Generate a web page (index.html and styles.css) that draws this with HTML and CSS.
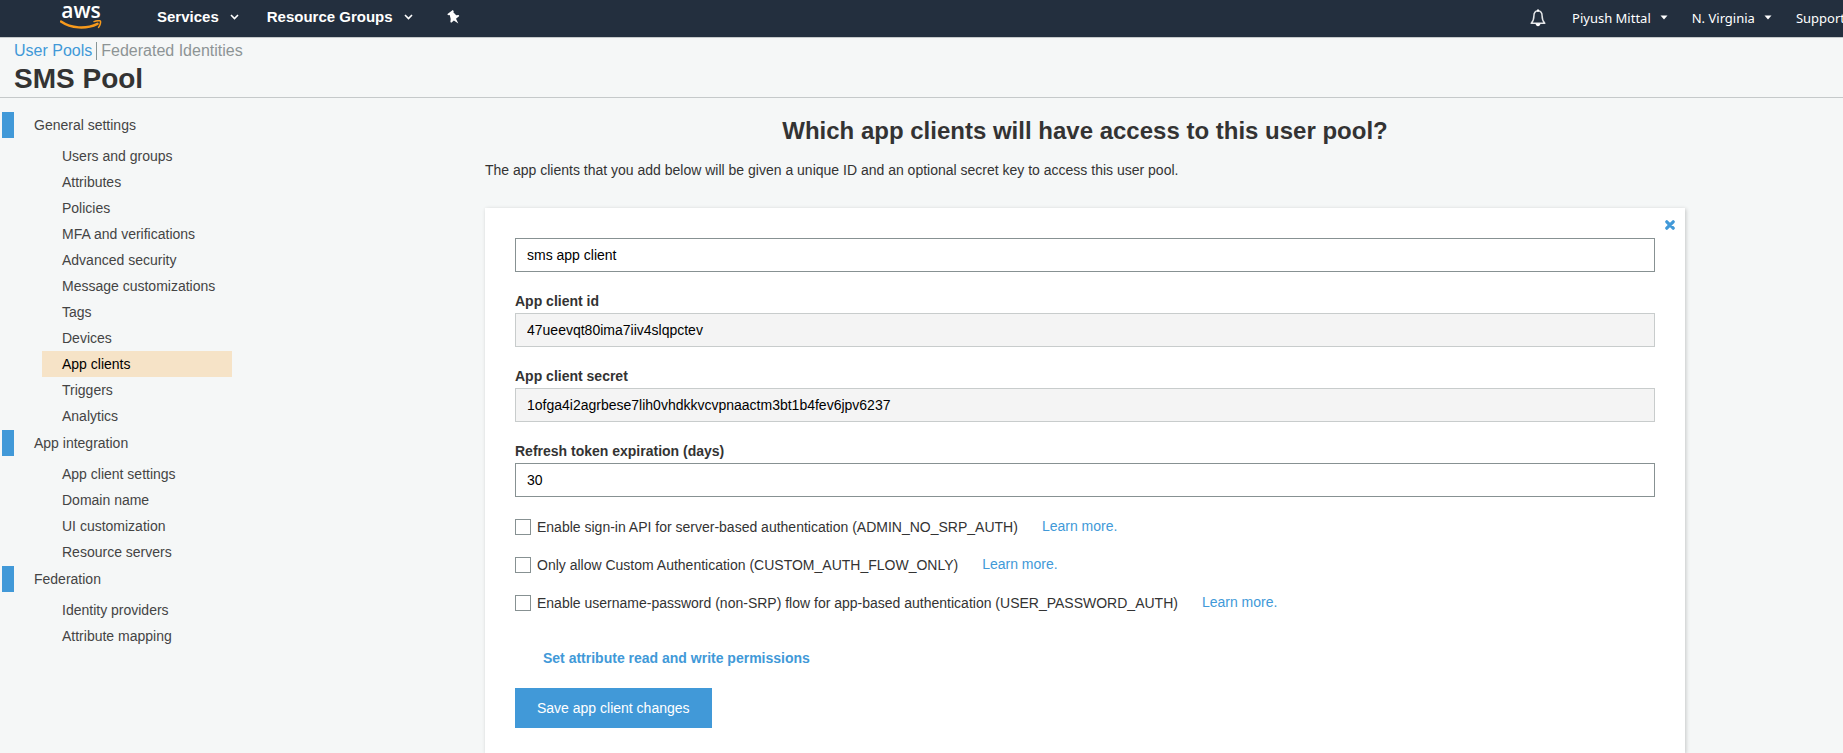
FILE: index.html
```
<!DOCTYPE html>
<html lang="en">
<head>
<meta charset="utf-8">
<title>SMS Pool - User Pools</title>
<link rel="stylesheet" href="styles.css">
</head>
<body>
<header class="topbar">
  <a class="logo" href="#" aria-label="aws">
    <span class="logo-text">aws</span>
    <svg class="logo-smile" width="42" height="10" viewBox="0 0 42 10" aria-hidden="true">
      <path d="M1 1.5C11 8.5 26 9.5 37.5 3.8" fill="none" stroke="#f79a1c" stroke-width="2.4" stroke-linecap="round"/>
      <path d="M34 1.6C37 .6 40 .6 40.4 1.2 41 2.2 40 5.6 38.6 7.4" fill="none" stroke="#f79a1c" stroke-width="1.5" stroke-linecap="round"/>
    </svg>
  </a>
  <nav class="nav-main">
    <button class="nav-item" type="button">Services
      <svg width="9" height="6" viewBox="0 0 9 6" aria-hidden="true"><path d="M1 1l3.5 3.5L8 1" fill="none" stroke="#fff" stroke-width="1.6"/></svg>
    </button>
    <button class="nav-item" type="button">Resource Groups
      <svg width="9" height="6" viewBox="0 0 9 6" aria-hidden="true"><path d="M1 1l3.5 3.5L8 1" fill="none" stroke="#fff" stroke-width="1.6"/></svg>
    </button>
    <button class="nav-pin" type="button" aria-label="Pin shortcuts">
      <svg width="13" height="14" viewBox="0 0 13 14" aria-hidden="true"><path d="M5.8 0L6.8 1.2 6.3 2.3 9.2 5.2 11.6 5.1 12.3 6.1 9 8.8 11.3 13.4 6.9 10.4 4.2 12.8 3.4 11.9 3.7 9.1 2.7 5.1 1.5 5.3.2 4.2z" fill="#fff"/></svg>
    </button>
  </nav>
  <nav class="nav-account">
    <button class="nav-bell" type="button" aria-label="Notifications">
      <svg width="16" height="18" viewBox="0 0 16 18" aria-hidden="true"><path d="M8 1.8C4.900 2 3.900 4.200 3.900 7 3.900 10.500 3 12.500 1.200 14.200H14.800C13 12.500 12.100 10.500 12.100 7 12.100 4.200 11.100 2 8 1.800z" fill="none" stroke="#e4e6e8" stroke-width="1.5" stroke-linejoin="round"/><path d="M7 .5h2v2H7zM5.500 14.500h5c-.3 1.700-1.200 2.700-2.500 2.700s-2.200-1-2.500-2.700z" fill="#fff"/></svg>
    </button>
    <button class="account-item" type="button">Piyush Mittal
      <svg width="8" height="5" viewBox="0 0 8 5" aria-hidden="true"><path d="M.5.500h7L4 4.500z" fill="#fff"/></svg>
    </button>
    <button class="account-item" type="button">N. Virginia
      <svg width="8" height="5" viewBox="0 0 8 5" aria-hidden="true"><path d="M.5.500h7L4 4.500z" fill="#fff"/></svg>
    </button>
    <button class="account-item" type="button">Support</button>
  </nav>
</header>

<div class="pool-header">
  <div class="crumbs"><a class="crumb crumb-active" href="#">User Pools</a><a class="crumb" href="#">Federated Identities</a></div>
  <h1 class="pool-name">SMS Pool</h1>
</div>

<div class="layout">
  <nav class="sidebar">
    <section class="group">
      <a class="group-title" href="#">General settings</a>
      <ul class="group-list">
        <li><a href="#">Users and groups</a></li>
        <li><a href="#">Attributes</a></li>
        <li><a href="#">Policies</a></li>
        <li><a href="#">MFA and verifications</a></li>
        <li><a href="#">Advanced security</a></li>
        <li><a href="#">Message customizations</a></li>
        <li><a href="#">Tags</a></li>
        <li><a href="#">Devices</a></li>
        <li><a class="current" href="#">App clients</a></li>
        <li><a href="#">Triggers</a></li>
        <li><a href="#">Analytics</a></li>
      </ul>
    </section>
    <section class="group">
      <a class="group-title" href="#">App integration</a>
      <ul class="group-list">
        <li><a href="#">App client settings</a></li>
        <li><a href="#">Domain name</a></li>
        <li><a href="#">UI customization</a></li>
        <li><a href="#">Resource servers</a></li>
      </ul>
    </section>
    <section class="group">
      <a class="group-title" href="#">Federation</a>
      <ul class="group-list">
        <li><a href="#">Identity providers</a></li>
        <li><a href="#">Attribute mapping</a></li>
      </ul>
    </section>
  </nav>

  <main class="content">
    <h2 class="title">Which app clients will have access to this user pool?</h2>
    <p class="intro">The app clients that you add below will be given a unique ID and an optional secret key to access this user pool.</p>
    <form class="card">
      <button class="close" type="button" aria-label="Close">
        <svg width="10" height="10" viewBox="0 0 10 10" aria-hidden="true"><path d="M1.800 1.800l6.400 6.400M8.200 1.800L1.800 8.200" stroke="#4199d8" stroke-width="3.200" stroke-linecap="round"/></svg>
      </button>
      <input class="text-input" type="text" aria-label="App client name" value="sms app client">
      <div class="field">
        <label class="field-label" for="client-id">App client id</label>
        <input class="text-input" id="client-id" type="text" readonly value="47ueevqt80ima7iiv4slqpctev">
      </div>
      <div class="field">
        <label class="field-label" for="client-secret">App client secret</label>
        <input class="text-input" id="client-secret" type="text" readonly value="1ofga4i2agrbese7lih0vhdkkvcvpnaactm3bt1b4fev6jpv6237">
      </div>
      <div class="field">
        <label class="field-label" for="expiry">Refresh token expiration (days)</label>
        <input class="text-input" id="expiry" type="text" value="30">
      </div>
      <div class="checks">
        <div class="check-row">
          <label class="check"><input type="checkbox">Enable sign-in API for server-based authentication (ADMIN_NO_SRP_AUTH)</label>
          <a class="link" href="#">Learn more.</a>
        </div>
        <div class="check-row">
          <label class="check"><input type="checkbox">Only allow Custom Authentication (CUSTOM_AUTH_FLOW_ONLY)</label>
          <a class="link" href="#">Learn more.</a>
        </div>
        <div class="check-row">
          <label class="check"><input type="checkbox">Enable username-password (non-SRP) flow for app-based authentication (USER_PASSWORD_AUTH)</label>
          <a class="link" href="#">Learn more.</a>
        </div>
      </div>
      <a class="link permissions" href="#">Set attribute read and write permissions</a>
      <button class="save" type="submit">Save app client changes</button>
    </form>
  </main>
</div>
</body>
</html>
```

FILE: styles.css
```
* { box-sizing: border-box; }

body {
  margin: 0;
  min-height: 100vh;
  display: flex;
  flex-direction: column;
  overflow-x: hidden;
  background: #f5f7f7;
  color: #333;
  font: 14px/20px "Liberation Sans", Arial, sans-serif;
}

a { text-decoration: none; color: inherit; }
button { border: 0; padding: 0; background: none; color: inherit; font: inherit; cursor: pointer; }
svg { display: block; flex: none; }

.topbar {
  display: flex;
  align-items: center;
  height: 38px;
  padding-left: 60px;
  background: #232f3e;
  border-bottom: 1px solid #c5c9ca;
  color: #fff;
}
.logo { display: flex; flex-direction: column; align-items: center; width: 42px; padding-bottom: 6px; }
.logo-text { font: 600 21px/18px "Open Sans", "Noto Sans", sans-serif; }
.logo-smile { margin-top: 1px; }
.nav-main { display: flex; align-items: center; gap: 28px; margin-left: 55px; padding-bottom: 4px; }
.nav-item { display: flex; align-items: center; gap: 11px; font-weight: 700; font-size: 15px; white-space: nowrap; }
.nav-pin { margin-left: 6px; }
.nav-account {
  display: flex;
  align-items: center;
  gap: 24px;
  margin-left: auto;
  margin-right: -2px;
  padding-bottom: 2px;
  font: 13px/18px "Noto Sans", "Open Sans", sans-serif;
}
.nav-bell { margin-right: 2px; }
.account-item { display: flex; align-items: center; gap: 9px; white-space: nowrap; }

.pool-header { height: 60px; padding: 4px 14px 0; border-bottom: 1px solid #c5c9ca; }
.crumbs { display: flex; font-size: 16px; line-height: 18px; }
.crumb { color: #8d9495; }
.crumb-active { color: #4199d8; padding-right: 4px; margin-right: 4px; border-right: 1px solid #879596; }
.pool-name { margin: 3px 0 0; font-size: 28px; line-height: 32px; color: #333; }

.layout { flex: 1; display: flex; }

.sidebar { flex: 0 0 327px; padding: 14px 0 0 2px; color: #444; }
.group + .group { margin-top: 1px; }
.group-title { display: block; padding-left: 20px; border-left: 12px solid #4199d8; line-height: 26px; }
.group-list { list-style: none; margin: 0; padding: 5px 0 0 40px; }
.group-list a { display: block; width: 190px; padding-left: 20px; line-height: 26px; }
.group-list .current { background: #f6e3c7; color: #000; }

.content { flex: 1; display: flex; flex-direction: column; max-width: 1200px; margin: 0 auto; padding-top: 18px; }
.title { margin: 0; font-size: 24px; line-height: 30px; text-align: center; }
.intro { margin: 14px 0 28px; }

.card {
  position: relative;
  flex: 1;
  display: flex;
  flex-direction: column;
  align-items: flex-start;
  padding: 30px 30px 24px;
  background: #fff;
  box-shadow: 1px 1px 4px rgba(0, 0, 0, .2);
}
.close { position: absolute; top: 12px; right: 10px; }
.text-input {
  display: block;
  width: 100%;
  height: 34px;
  padding: 0 11px 1px;
  border: 1px solid #879192;
  border-radius: 0;
  background: #fff;
  color: #000;
  font: inherit;
}
.text-input:read-only { border-color: #c8cccc; background: #f4f4f4; }
.field { width: 100%; padding-top: 19px; }
.field-label { display: block; margin-bottom: 2px; font-weight: 700; }

.checks { display: flex; flex-direction: column; gap: 18px; padding: 20px 0 35px; }
.check-row { display: flex; align-items: center; gap: 24px; }
.check { display: flex; align-items: center; gap: 6px; }
.check input {
  appearance: none;
  width: 16px;
  height: 16px;
  margin: 0;
  border: 1px solid #879192;
  background: #fff;
}
.link { color: #4199d8; }
.check-row .link { padding-bottom: 2px; line-height: 18px; }
.permissions { margin-left: 28px; font-weight: 700; }
.save { margin-top: 20px; padding: 10px 22px; background: #4199d8; color: #fff; }
```
